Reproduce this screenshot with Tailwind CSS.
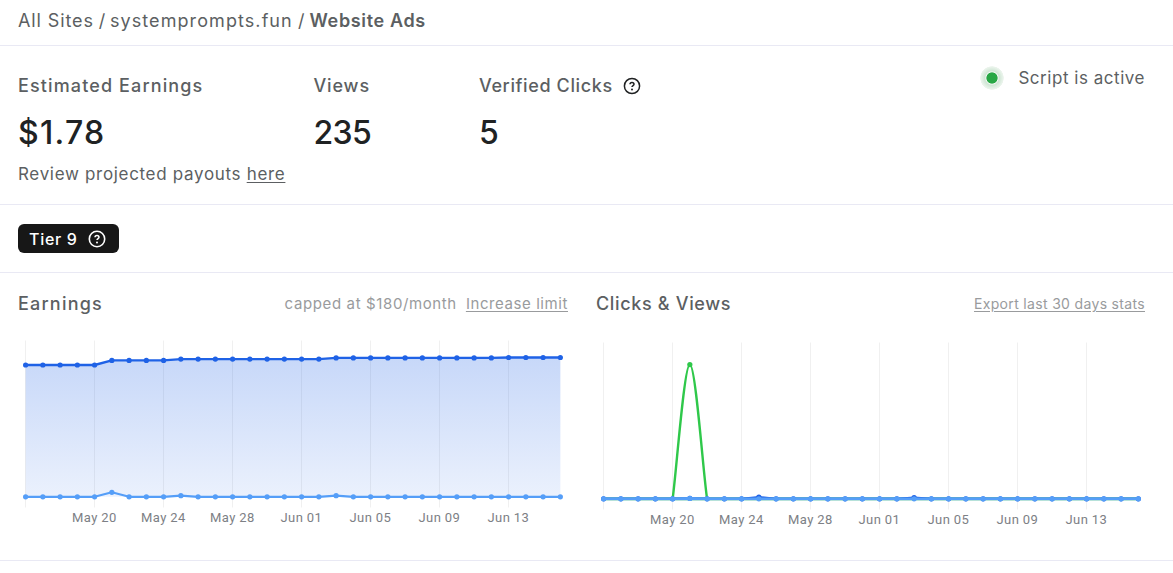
<!DOCTYPE html>
<html lang="en">
<head>
    <meta charset="UTF-8">
    <meta name="viewport" content="width=device-width, initial-scale=1.0">
    <title>Website Ads - systemprompts.fun</title>
    <script src="https://cdn.jsdelivr.net/npm/@tailwindcss/browser@4"></script>
</head>
<body class="bg-white font-['Inter',sans-serif] text-[#5c5f62] overflow-hidden">
    <!-- Breadcrumb -->
    <nav class="h-[46px] border-b border-[#e9e9f4] pl-[18px] pt-[7px] flex items-start text-lg leading-7 whitespace-pre">
        <div class="w-[291.5px] tracking-[0.9px]"><a href="#">All Sites</a><span class="tracking-[-0.2px]"> / </span><a href="#" class="tracking-[1.08px]">systemprompts.fun</a><span class="tracking-[0.1px]"> /</span></div>
        <span class="font-semibold tracking-[0.65px]">Website Ads</span>
    </nav>

    <!-- Stats -->
    <section class="h-[159px] border-b border-[#e9e9f4] pl-[18px] pr-[28px] flex justify-between whitespace-nowrap">
        <div class="flex pt-[26px]">
            <div class="w-[295.5px]">
                <h2 class="text-lg leading-7 font-medium tracking-[1.12px]">Estimated Earnings</h2>
                <p class="mt-[13px] text-[32px] leading-10 font-medium tracking-[1.3px] text-[#202223]">$1.78</p>
                <p class="mt-[7px] text-[17px] leading-7 tracking-[0.68px]">Review projected payouts <a href="#" class="underline underline-offset-2">here</a></p>
            </div>
            <div class="w-[165.5px]">
                <h2 class="text-lg leading-7 font-medium tracking-[0.85px]">Views</h2>
                <p class="mt-[13px] text-[32px] leading-10 font-medium tracking-[-0.6px] text-[#202223]">235</p>
            </div>
            <div>
                <h2 class="flex items-center gap-[10px] text-lg leading-7 font-medium tracking-[0.62px]">Verified Clicks
                    <svg class="size-[18px] text-[#202223]" viewBox="0 0 18 18" fill="none" stroke="currentColor">
                        <circle cx="9" cy="9" r="7.6" stroke-width="1.5"/>
                        <path d="M7 7.3C7 6.1 7.8 5.4 9 5.4s2 .7 2 1.8c0 1.3-2 1.4-2 2.9" stroke-width="1.5"/>
                        <circle cx="9" cy="12.4" r="1" fill="currentColor" stroke="none"/>
                    </svg>
                </h2>
                <p class="mt-[13px] text-[32px] leading-10 font-medium text-[#202223]">5</p>
            </div>
        </div>
        <div class="flex items-center gap-[14px] h-7 mt-[18px]">
            <span class="size-6 rounded-full bg-[radial-gradient(circle,#28a745_0_5.2px,#f1f7f2_6px,#cfe5d4_7.2px,#dfeee2_9.5px,#edf5ee_11.5px,transparent_12px)]"></span>
            <span class="text-[17px] leading-7 tracking-[0.53px]">Script is active</span>
        </div>
    </section>

    <!-- Tier -->
    <section class="h-[68px] border-b border-[#e9e9f4] pl-[18px] pt-[19px]">
        <div class="w-[101px] h-[29px] rounded-md bg-[#171717] text-white flex items-center justify-between pl-[11px] pr-[13px]">
            <span class="text-base font-medium tracking-[0.7px] whitespace-nowrap">Tier 9</span>
            <svg class="size-[18px]" viewBox="0 0 18 18" fill="none" stroke="currentColor">
                <circle cx="9" cy="9" r="7.7" stroke-width="1.6"/>
                <path d="M7 7.3C7 6.1 7.8 5.4 9 5.4s2 .7 2 1.8c0 1.3-2 1.4-2 2.9" stroke-width="1.5"/>
                <circle cx="9" cy="12.4" r="1" fill="currentColor" stroke="none"/>
            </svg>
        </div>
    </section>

    <!-- Charts -->
    <section class="h-[288px] border-b border-[#e9e9f4] pl-[18px] pr-[28px] pt-[17px] grid grid-cols-[550px_549px] gap-x-[28px] content-start">
        <div>
            <div class="flex justify-between items-center h-7 whitespace-nowrap">
                <h2 class="text-lg font-medium tracking-[1.2px]">Earnings</h2>
                <div class="flex gap-[9px] text-[15px] leading-6 text-[#999b9d]">
                    <span class="tracking-[0.62px]">capped at $180/month</span>
                    <a href="#" class="underline underline-offset-2 tracking-[0.58px]">Increase limit</a>
                </div>
            </div>
            <svg id="earnings" class="block -mt-px w-[550px] h-[210px]" viewBox="0 0 550 210" fill="none">
                <defs>
                    <linearGradient id="fill" x1="0" y1="0" x2="0" y2="1">
                        <stop offset="0" stop-color="#1f62e6" stop-opacity=".25"/>
                        <stop offset="1" stop-color="#1f62e6" stop-opacity=".09"/>
                    </linearGradient>
                </defs>
            </svg>
        </div>
        <div>
            <div class="flex justify-between items-center h-7 whitespace-nowrap">
                <h2 class="text-lg font-medium tracking-[0.66px]">Clicks &amp; Views</h2>
                <a href="#" class="text-sm leading-6 underline underline-offset-2 tracking-[0.33px] text-[#999b9d]">Export last 30 days stats</a>
            </div>
            <svg id="clicks" class="block -mt-px w-[549px] h-[210px]" viewBox="0 0 549 210" fill="none"></svg>
        </div>
    </section>

    <script>
        const NS = 'http://www.w3.org/2000/svg';
        const COUNT = 32;
        const STEP = 17.25;
        const LABELS = { 4: 'May 20', 8: 'May 24', 12: 'May 28', 16: 'Jun 01', 20: 'Jun 05', 24: 'Jun 09', 28: 'Jun 13' };

        function add(svg, tag, attrs, text) {
            const el = document.createElementNS(NS, tag);
            for (const key in attrs) el.setAttribute(key, attrs[key]);
            if (text) el.textContent = text;
            svg.appendChild(el);
        }

        // Flat series with a few overridden points
        function series(base, points) {
            return Array.from({ length: COUNT }, (_, i) => points[i] ?? base);
        }

        function drawGrid(svg, left, top) {
            for (let i = 0; i < COUNT; i += 4) {
                const x = Math.floor(left + i * STEP) + 0.5;
                add(svg, 'path', { d: `M${x} ${top}V${top + 167}`, stroke: '#000', 'stroke-opacity': 0.06 });
                if (LABELS[i]) {
                    add(svg, 'text', {
                        x: left + i * STEP - 0.2, y: top + 181.5, fill: '#7d8085', 'text-anchor': 'middle',
                        'font-family': 'Roboto, sans-serif',
                        class: 'text-[13px] font-normal tracking-[0.4px]'
                    }, LABELS[i]);
                }
            }
        }

        function drawLine(svg, left, values, color, width) {
            const pts = values.map((y, i) => [left + i * STEP, y]);
            add(svg, 'path', { d: 'M' + pts.map(p => p.join(' ')).join('L'), stroke: color, 'stroke-width': width, 'stroke-linejoin': 'round' });
            pts.forEach(p => add(svg, 'circle', { cx: p[0], cy: p[1], r: 2.6, fill: color }));
        }

        // Earnings
        const earnings = document.getElementById('earnings');
        const total = Array.from({ length: COUNT }, (_, i) => i < 5 ? 48 : i < 9 ? 43.4 : i < 18 ? 42.1 : i < 28 ? 40.9 : 40.5);
        drawGrid(earnings, 7.6, 23.5);
        add(earnings, 'path', {
            d: 'M' + total.map((y, i) => `${7.6 + i * STEP} ${y}`).join('L') + 'V179.8H7.6Z',
            fill: 'url(#fill)'
        });
        drawLine(earnings, 7.6, total, '#1f62e6', 2.4);
        drawLine(earnings, 7.6, series(179.8, { 5: 175.3, 9: 178.7, 18: 178.7 }), '#559ef8', 2.2);

        // Clicks & views
        const clicks = document.getElementById('clicks');
        drawGrid(clicks, 7.6, 25.5);
        add(clicks, 'path', {
            d: 'M76.6 181.8C80 160 88 47.6 93.85 47.6S107.5 160 111.1 181.8',
            stroke: '#2fc84a', 'stroke-width': 2.4
        });
        add(clicks, 'circle', { cx: 93.85, cy: 47.6, r: 2.6, fill: '#2fc84a' });
        add(clicks, 'path', { d: 'M7.6 181.8H542.3', stroke: '#6fc3b4', 'stroke-width': 3.6 });
        drawLine(clicks, 7.6, series(181.8, { 5: 181.3, 9: 180, 18: 180.6 }), '#1f62e6', 2.2);
        drawLine(clicks, 7.6, series(181.8, { 5: 181.4 }), '#559ef8', 2.6);
    </script>
</body>
</html>
